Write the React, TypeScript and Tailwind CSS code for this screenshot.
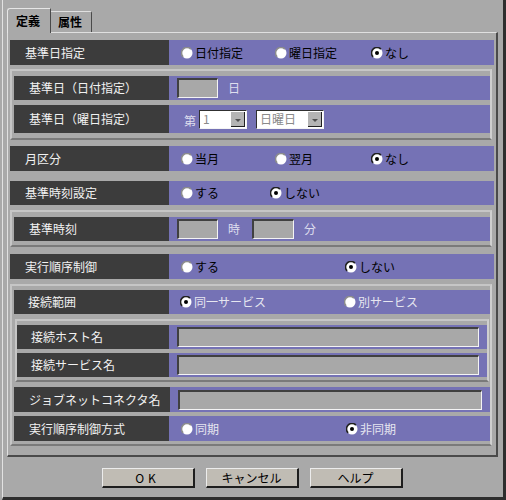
import React from 'react';

const font = "font-['Noto_Sans_CJK_JP',sans-serif]";

function Radio({ checked, label, dim, className }: { checked?: boolean; label: string; dim?: boolean; className?: string }) {
  return (
    <div className={`flex items-center gap-[2px] ${className ?? ''}`}>
      <svg width="12" height="12" viewBox="0 0 12 12">
        <circle cx="6" cy="6" r="5.5" fill="#ffffff" />
        <path d="M2.1 9.9 A5.5 5.5 0 0 1 9.9 2.1" stroke={checked ? '#202020' : '#8c8c8c'} strokeWidth="1.6" fill="none" />
        {checked && <circle cx="6" cy="6" r="2" fill="#000000" />}
      </svg>
      <span className={dim ? 'text-[#e6e6f0]' : 'text-black'}>{label}</span>
    </div>
  );
}

function Row({ label, labelClass, rowClass, children }: { label: string; labelClass: string; rowClass: string; children?: React.ReactNode }) {
  return (
    <div className={`flex text-[12px] leading-none ${rowClass}`}>
      <div className={`flex shrink-0 items-center bg-[#3c3c3c] text-[#f2f2f2] ${labelClass}`}>{label}</div>
      <div className="flex flex-1 items-center bg-[#7572b5]">{children}</div>
    </div>
  );
}

function TextBox({ className }: { className: string }) {
  return <div className={`border-t-2 border-l-2 border-t-[#404040] border-l-[#404040] border-b border-r border-b-[#f4f4f4] border-r-[#f4f4f4] bg-[#a8a8a8] ${className}`} />;
}

function Select({ value, className }: { value: string; className: string }) {
  return (
    <div className={`flex items-stretch border-t border-l border-[#303030] border-b border-r border-b-[#f4f4f4] border-r-[#f4f4f4] bg-white ${className}`}>
      <div className="flex flex-1 items-center pl-[3px] text-[12px] text-[#8a8a8a]">{value}</div>
      <div className="m-[1px] flex w-[14px] items-end justify-center border-r border-b border-[#202020] bg-[#b4b4b4] pb-[3px]">
        <svg width="6" height="4" viewBox="0 0 6 4">
          <path d="M0 0 H6 L3 3 Z" fill="#505050" />
        </svg>
      </div>
    </div>
  );
}

function Button({ label, className }: { label: string; className?: string }) {
  return (
    <div className={`flex h-[20px] w-[93px] items-center justify-center border-t border-l border-[#ececec] border-r-2 border-b-2 border-r-[#1e1e1e] border-b-[#1e1e1e] bg-[#c0bcb4] text-[12px] text-black ${className ?? ''}`}>
      {label}
    </div>
  );
}

const group = 'border-2 border-[#c6c6c6] border-r-[#cfcfcf] border-b-[#7a7a7a]';

export default function App() {
  return (
    <div className={`h-[500px] w-[506px] bg-[#a9a9a9] pl-[2px] ${font}`}>
      <div className="flex h-full flex-col border-l border-[#e2e2e2] border-r-[3px] border-b-[3px] border-r-[#2e2e2e] border-b-[#2e2e2e] pt-[8px]">
        {/* tabs */}
        <div className="ml-[4px] flex h-[24px] items-end">
          <div className="relative z-10 -mb-px flex h-[25px] w-[44px] items-center rounded-tl-[3px] border-l border-t border-[#e6e6e6] border-r border-r-[#4a4a4a] bg-[#a9a9a9] pl-[8px] pb-[1px] text-[12px] font-bold">
            定義
          </div>
          <div className="flex h-[21px] w-[41px] items-center rounded-tr-[2px] border-t border-[#e0e0e0] border-r border-r-[#4a4a4a] pl-[7px] text-[12px] font-bold">
            属性
          </div>
        </div>

        {/* panel */}
        <div className="ml-[4px] flex w-[491px] flex-col border-l border-t border-[#e0e0e0] border-r-2 border-b-2 border-r-[#4a4a4a] border-b-[#4a4a4a] pt-[7px] pb-[9px]">
          <Row label="基準日指定" labelClass="w-[159px] pl-[15px]" rowClass="ml-[2px] h-[25px] w-[484px]">
            <Radio label="日付指定" className="ml-[12px] w-[94px]" />
            <Radio label="曜日指定" className="w-[96px]" />
            <Radio label="なし" checked />
          </Row>

          <div className={`ml-[2px] mt-[4px] flex w-[482px] flex-col gap-[5px] pl-[2px] pt-[5px] pb-[5px] ${group}`}>
            <Row label="基準日（日付指定）" labelClass="w-[155px] pl-[15px]" rowClass="h-[24px] w-[476px]">
              <TextBox className="ml-[8px] h-[20px] w-[41px]" />
              <span className="ml-[10px] text-[#dedeee]">日</span>
            </Row>
            <Row label="基準日（曜日指定）" labelClass="w-[155px] pl-[15px]" rowClass="h-[28px] w-[476px]">
              <span className="ml-[15px] mt-[4px] text-[#dedeee]">第</span>
              <Select value="1" className="ml-[3px] h-[19px] w-[48px]" />
              <Select value="日曜日" className="ml-[9px] h-[19px] w-[68px]" />
            </Row>
          </div>

          <Row label="月区分" labelClass="w-[159px] pl-[15px]" rowClass="ml-[2px] mt-[6px] h-[25px] w-[484px]">
            <Radio label="当月" className="ml-[12px] w-[94px]" />
            <Radio label="翌月" className="w-[96px]" />
            <Radio label="なし" checked />
          </Row>

          <Row label="基準時刻設定" labelClass="w-[159px] pl-[15px]" rowClass="ml-[2px] mt-[10px] h-[24px] w-[484px]">
            <Radio label="する" className="ml-[12px] w-[89px]" />
            <Radio label="しない" checked />
          </Row>

          <div className={`ml-[2px] mt-[5px] flex w-[482px] flex-col pl-[2px] pt-[5px] pb-[4px] ${group}`}>
            <Row label="基準時刻" labelClass="w-[155px] pl-[15px]" rowClass="h-[24px] w-[476px]">
              <TextBox className="ml-[8px] h-[20px] w-[41px]" />
              <span className="ml-[10px] text-[#dedeee]">時</span>
              <TextBox className="ml-[12px] h-[20px] w-[42px]" />
              <span className="ml-[10px] text-[#dedeee]">分</span>
            </Row>
          </div>

          <Row label="実行順序制御" labelClass="w-[159px] pl-[15px]" rowClass="ml-[2px] mt-[7px] h-[25px] w-[484px]">
            <Radio label="する" className="ml-[12px] w-[164px]" />
            <Radio label="しない" checked />
          </Row>

          <div className={`ml-[2px] mt-[5px] flex w-[482px] flex-col pl-[2px] pt-[4px] pb-[3px] ${group}`}>
            <Row label="接続範囲" labelClass="w-[155px] pl-[14px]" rowClass="h-[24px] w-[476px]">
              <Radio label="同一サービス" checked dim className="ml-[11px] w-[164px]" />
              <Radio label="別サービス" dim />
            </Row>

            <div className={`ml-[1px] mt-[5px] flex w-[474px] flex-col gap-[4px] pt-[4px] pb-[3px] ${group}`}>
              <Row label="接続ホスト名" labelClass="w-[152px] pl-[14px]" rowClass="h-[24px] w-[470px]">
                <TextBox className="ml-[8px] h-[20px] w-[302px]" />
              </Row>
              <Row label="接続サービス名" labelClass="w-[152px] pl-[14px]" rowClass="h-[24px] w-[470px]">
                <TextBox className="ml-[8px] h-[20px] w-[302px]" />
              </Row>
            </div>

            <Row label="ジョブネットコネクタ名" labelClass="w-[156px] pl-[15px]" rowClass="mt-[5px] h-[25px] w-[476px]">
              <TextBox className="ml-[8px] h-[20px] w-[304px]" />
            </Row>
            <Row label="実行順序制御方式" labelClass="w-[155px] pl-[15px]" rowClass="mt-[4px] h-[25px] w-[476px]">
              <Radio label="同期" dim className="ml-[12px] w-[165px]" />
              <Radio label="非同期" checked dim />
            </Row>
          </div>
        </div>

        {/* buttons */}
        <div className="mt-[11px] flex justify-center gap-[11px] pr-[2px]">
          <Button label="OK" className="tracking-[4px]" />
          <Button label="キャンセル" />
          <Button label="ヘルプ" />
        </div>
      </div>
    </div>
  );
}
